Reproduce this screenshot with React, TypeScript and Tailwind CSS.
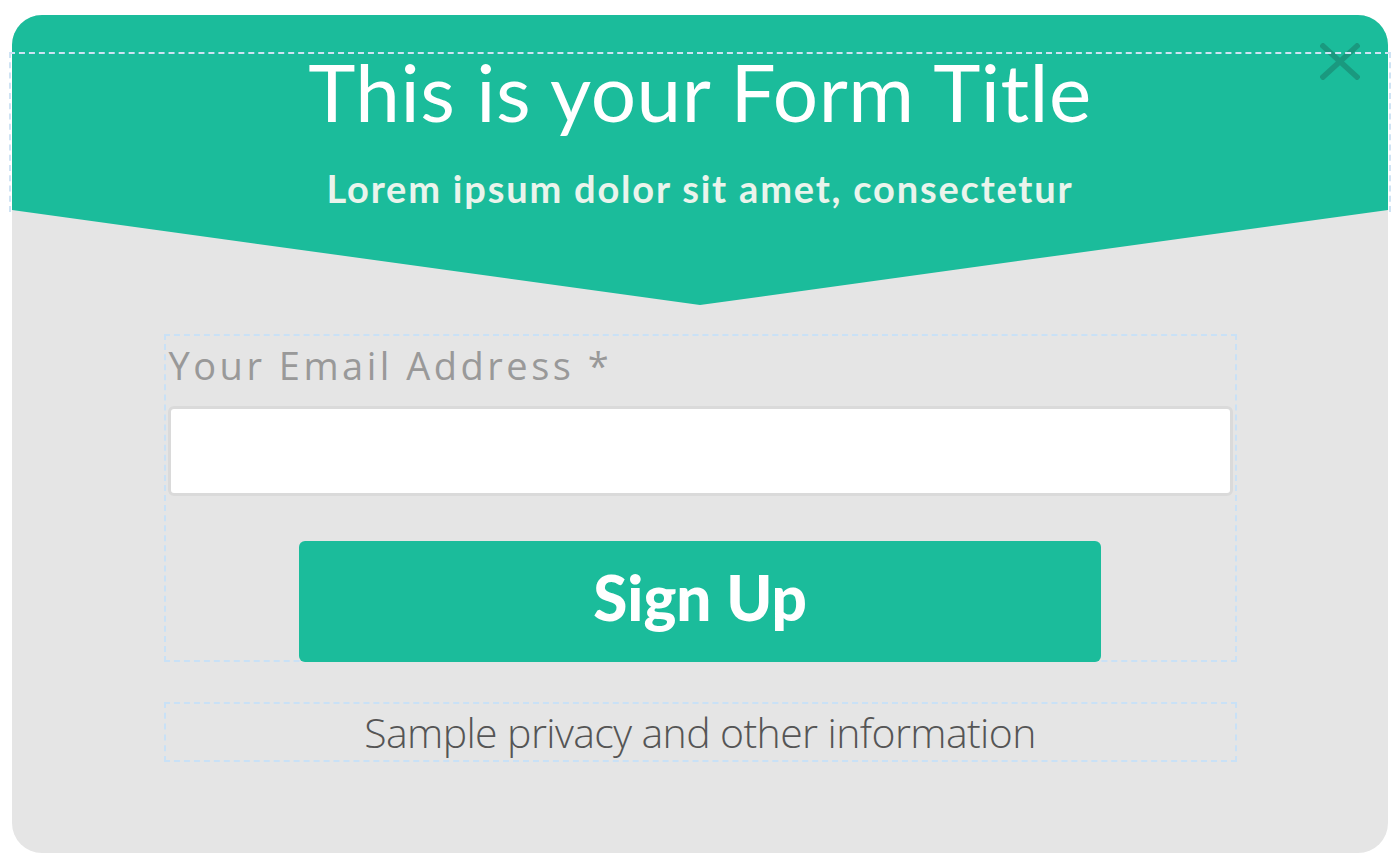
export default function App() {
  return (
    <div className="min-h-screen w-full bg-white pt-[15px] pl-[12px]">
      <div className="relative w-[1376px] h-[838px] rounded-[30px] bg-[#e5e5e5] overflow-hidden flex flex-col items-center">
        <div className="w-full h-[195px] bg-[#1bbc9b] flex flex-col items-center shrink-0">
          <h1
            className="mt-[36px] text-[80px] leading-none text-white tracking-[0.5px]"
            style={{ fontFamily: "Lato, 'Open Sans', sans-serif" }}
          >
            This is your Form Title
          </h1>
          <p
            className="mt-[38px] text-[38px] leading-none font-bold text-[#eaf4ec] tracking-[1.8px]"
            style={{ fontFamily: "Lato, 'Open Sans', sans-serif" }}
          >
            Lorem ipsum dolor sit amet, consectetur
          </p>
        </div>
        <svg className="block w-full h-[95px] shrink-0" viewBox="0 0 1376 95" preserveAspectRatio="none">
          <polygon points="0,0 1376,0 688,95" fill="#1bbc9b" />
        </svg>

        <div className="mt-[29px] w-[1073px] border-2 border-dashed border-[#c9e1f6] px-[2px] pt-[10px] flex flex-col">
          <label
            className="pl-[1px] text-[38px] leading-none text-[#999999] tracking-[3.5px]"
            style={{ fontFamily: "'Open Sans', sans-serif" }}
          >
            Your Email Address *
          </label>
          <input className="mt-[22px] h-[90px] w-[1065px] bg-white border-[3px] border-[#dadada] rounded-[6px] outline-none" />
          <button
            className="mt-[45px] mx-auto w-[802px] h-[121px] pb-[8px] rounded-[6px] bg-[#1bbc9b] text-white text-[62px] font-black tracking-[0px] -mb-[2px]"
            style={{ fontFamily: "Lato, 'Open Sans', sans-serif" }}
          >
            Sign Up
          </button>
        </div>

        <div className="mt-[40px] w-[1073px] h-[60px] border-2 border-dashed border-[#c9e1f6] flex items-center justify-center">
          <span
            className="text-[41px] leading-none font-light text-[#555555] tracking-[-0.6px]"
            style={{ fontFamily: "'Open Sans', sans-serif" }}
          >
            Sample privacy and other information
          </span>
        </div>

        <svg className="absolute left-[1308px] top-[28px]" width="40" height="37" viewBox="0 0 40 37">
          <path d="M3 3 L37 34 M37 3 L3 34" stroke="#1a8a74" strokeOpacity="0.7" strokeWidth="5.5" strokeLinecap="square" />
        </svg>
      </div>
      <div className="absolute left-[9px] top-[52px] w-[1382px] h-[160px] border-t-2 border-l-2 border-r-2 border-dashed border-[#cfe3f4] pointer-events-none" />
    </div>
  );
}
